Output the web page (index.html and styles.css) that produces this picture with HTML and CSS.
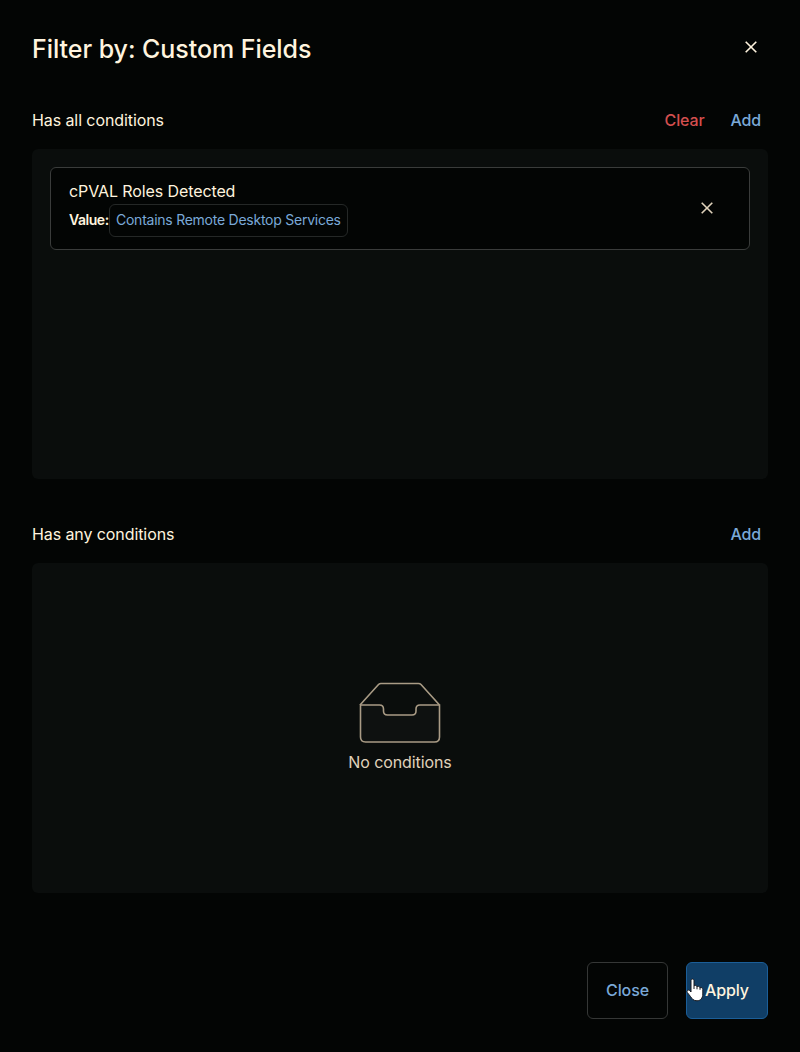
FILE: index.html
```html
<!DOCTYPE html>
<html lang="en">
<head>
<meta charset="utf-8">
<title>Filter by: Custom Fields</title>
<link rel="stylesheet" href="styles.css">
</head>
<body>
<main class="modal">
  <header class="modal-header">
    <h1 class="title">Filter by: Custom Fields</h1>
    <button class="icon-button" aria-label="Close dialog"><svg width="12" height="12" viewBox="0 0 12 12"><path d="M.7.7l10.6 10.6M11.3.7L.7 11.3"/></svg></button>
  </header>
  <section class="group">
    <div class="group-header">
      <h2 class="group-title">Has all conditions</h2>
      <div class="actions"><button class="link danger">Clear</button><button class="link">Add</button></div>
    </div>
    <div class="panel">
      <article class="condition">
        <div class="condition-text">
          <div class="condition-name">cPVAL Roles Detected</div>
          <div class="condition-value"><span class="label">Value:</span><span class="chip">Contains Remote Desktop Services</span></div>
        </div>
        <button class="icon-button remove" aria-label="Remove condition"><svg width="12" height="12" viewBox="0 0 12 12"><path d="M.7.7l10.6 10.6M11.3.7L.7 11.3"/></svg></button>
      </article>
    </div>
  </section>
  <section class="group">
    <div class="group-header">
      <h2 class="group-title">Has any conditions</h2>
      <div class="actions"><button class="link">Add</button></div>
    </div>
    <div class="panel empty">
      <svg class="tray" width="82" height="62" viewBox="0 0 82 62">
        <path class="tray-back" d="M1 23L19.500 2.500Q20.500 1.500 22 1.500H59.500Q61 1.500 62 2.500L80.500 23"/>
        <path class="tray-front" d="M1.500 23H20.500Q24.500 23 24.500 27V29Q24.500 33 28.500 33H53Q57 33 57 29V27Q57 23 61 23H80.500V55Q80.500 60 75.500 60H6.500Q1.500 60 1.500 55Z"/>
      </svg>
      <p class="empty-text">No conditions</p>
    </div>
  </section>
  <footer class="footer">
    <button class="button">Close</button>
    <button class="button primary">Apply
      <svg class="pointer" width="18" height="24" viewBox="0 0 18 24"><path d="M5 14V2.700C5 .500 8 .500 8 2.700V8C8.500 7 10.700 7.200 11 8.800C12 7.800 13.600 8.400 14 9.800C15.300 9.100 16.800 9.900 16.800 11.500V16C16.800 20 14.500 22.800 11 22.800C7.500 22.800 6.200 21 4.500 18.500L1.300 14.500C.300 12.800 2.200 11.300 3.700 12.600Z"/><path class="pointer-line" d="M8 8v3M11 8.800v2.500M14 9.800v2"/></svg>
    </button>
  </footer>
</main>
</body>
</html>
```
FILE: styles.css
```css
* { box-sizing: border-box; }
body { margin: 0; background: #030504; color: #fff4df; font-family: Inter, sans-serif; }
h1, h2, p { margin: 0; font-weight: 400; }
button { margin: 0; padding: 0; border: 0; background: none; font: inherit; white-space: nowrap; }
svg { display: block; fill: none; }
.modal { width: 800px; height: 1052px; padding: 32px; }
.modal-header { display: flex; justify-content: space-between; height: 60px; padding-right: 11px; }
.title { font-size: 25px; line-height: 34px; font-weight: 500; letter-spacing: -.05px; white-space: nowrap; }
.icon-button { display: flex; align-items: center; justify-content: center; width: 12px; height: 30px; }
.icon-button svg { stroke: #fff4df; stroke-width: 1.600; }
.group { height: 414px; }
.group-header { display: flex; justify-content: space-between; height: 57px; line-height: 56px; }
.group-title { font-size: 16px; letter-spacing: -.09px; }
.actions { display: flex; gap: 26px; padding-right: 7px; }
.link { height: 55px; color: #7aa9d8; font-size: 16px; font-weight: 500; line-height: 54px; letter-spacing: -.15px; }
.danger { color: #d44f4f; }
.panel { height: 330px; padding: 18px; border-radius: 6px; background: #0a0d0c; }
.condition { display: flex; justify-content: space-between; align-items: flex-start; height: 83px; padding: 12px 36px 0 18px; border: 1px solid #3a3c3b; border-radius: 6px; background: #030504; }
.condition-name { height: 24px; font-size: 16px; line-height: 22px; letter-spacing: -.1px; }
.condition-value { display: flex; align-items: center; height: 33px; font-size: 14px; }
.label { width: 40px; font-weight: 600; line-height: 31px; padding-bottom: 2px; letter-spacing: -.45px; white-space: nowrap; }
.chip { height: 33px; width: 239px; padding: 0 6px; border: 1px solid #252827; border-radius: 6px; color: #7aa9d8; line-height: 30px; letter-spacing: -.25px; white-space: nowrap; }
.remove { margin-top: 13px; }
.remove svg { stroke: #e0d3bc; stroke-width: 1.600; }
.empty { display: flex; flex-direction: column; align-items: center; padding-top: 119px; }
.tray { stroke: #a99b85; stroke-width: 1.600; }
.tray-front { fill: #0e1110; }
.empty-text { margin-top: 6px; color: #e0d3bc; font-size: 16px; line-height: 24px; letter-spacing: -.1px; }
.footer { display: flex; justify-content: flex-end; gap: 18px; padding-top: 42px; }
.button { width: 81px; height: 57px; padding-bottom: 2px; border: 1px solid #353736; border-radius: 6px; color: #7aa9d8; font-size: 16px; font-weight: 500; letter-spacing: -.1px; }
.primary { position: relative; width: 82px; border-color: #1b5e98; background: #103e66; color: #fff4df; }
.pointer { position: absolute; left: -1px; top: 15px; fill: #fff; stroke: #17191f; stroke-width: 1; }
.pointer-line { fill: none; }
```
